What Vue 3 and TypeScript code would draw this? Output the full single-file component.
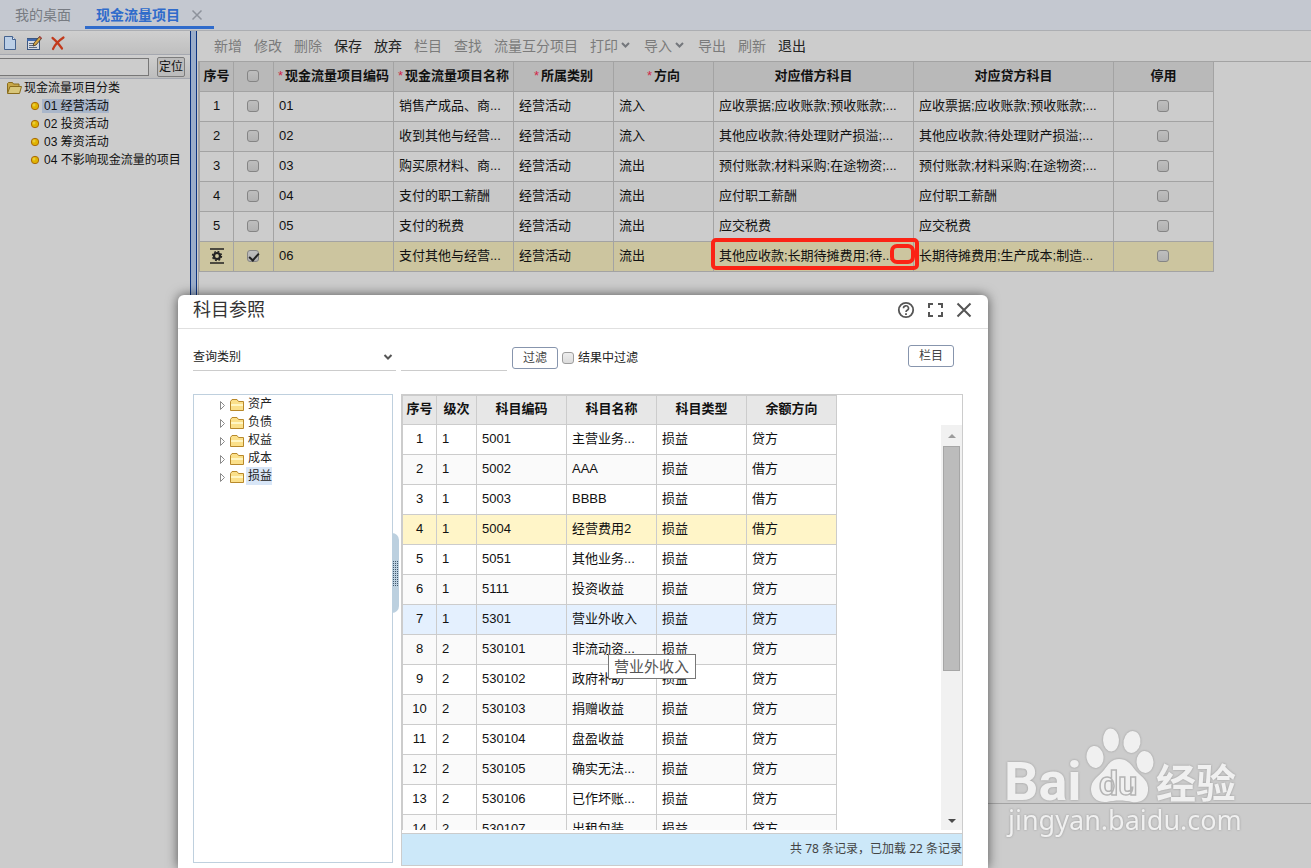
<script setup lang="ts">
import { ref } from 'vue'

interface Tool { label: string; active?: boolean; menu?: boolean }
interface FlowRow { code: string; name: string; kind: string; dir: string; debit: string; credit: string; checked: boolean; stopped: boolean }
interface Subject { level: number; code: string; name: string; side: string }

const tools: Tool[] = [
  { label: '新增' }, { label: '修改' }, { label: '删除' },
  { label: '保存', active: true }, { label: '放弃', active: true },
  { label: '栏目' }, { label: '查找' }, { label: '流量互分项目' },
  { label: '打印', menu: true }, { label: '导入', menu: true },
  { label: '导出' }, { label: '刷新' }, { label: '退出', active: true },
]

const categories = ['01 经营活动', '02 投资活动', '03 筹资活动', '04 不影响现金流量的项目']
const currentCategory = ref(0)

const flow = (code: string, name: string, dir: string, debit: string, credit: string, checked = false): FlowRow =>
  ({ code, name, kind: '经营活动', dir, debit, credit, checked, stopped: false })

const rows = ref<FlowRow[]>([
  flow('01', '销售产成品、商...', '流入', '应收票据;应收账款;预收账款;...', '应收票据;应收账款;预收账款;...'),
  flow('02', '收到其他与经营...', '流入', '其他应收款;待处理财产损溢;...', '其他应收款;待处理财产损溢;...'),
  flow('03', '购买原材料、商...', '流出', '预付账款;材料采购;在途物资;...', '预付账款;材料采购;在途物资;...'),
  flow('04', '支付的职工薪酬', '流出', '应付职工薪酬', '应付职工薪酬'),
  flow('05', '支付的税费', '流出', '应交税费', '应交税费'),
  flow('06', '支付其他与经营...', '流出', '其他应收款;长期待摊费用;待...', '长期待摊费用;生产成本;制造...', true),
])
const allChecked = ref(false)

const subjectKinds = ['资产', '负债', '权益', '成本', '损益']
const currentKind = ref('损益')

const subject = (level: number, code: string, name: string, side = '贷方'): Subject => ({ level, code, name, side })
const subjects: Subject[] = [
  subject(1, '5001', '主营业务...'),
  subject(1, '5002', 'AAA', '借方'),
  subject(1, '5003', 'BBBB', '借方'),
  subject(1, '5004', '经营费用2', '借方'),
  subject(1, '5051', '其他业务...'),
  subject(1, '5111', '投资收益'),
  subject(1, '5301', '营业外收入'),
  subject(2, '530101', '非流动资...'),
  subject(2, '530102', '政府补助'),
  subject(2, '530103', '捐赠收益'),
  subject(2, '530104', '盘盈收益'),
  subject(2, '530105', '确实无法...'),
  subject(2, '530106', '已作坏账...'),
  subject(2, '530107', '出租包装...'),
]
const selectedSubject = '5004'
const hoveredSubject = '5301'

const queryKind = ref('查询类别')
const keyword = ref('')
const withinResult = ref(false)
const locateText = ref('')
</script>

<template>
  <div class="page">
    <nav class="tabs">
      <a class="tab" href="#desk">我的桌面</a>
      <a class="tab current" href="#flow">现金流量项目
        <svg width="12" height="12" viewBox="0 0 12 12"><path d="M1.500 1.500l9 9m0-9l-9 9" stroke="#8d929b" stroke-width="1.500" fill="none" /></svg>
      </a>
    </nav>

    <div class="work">
      <aside class="side">
        <div class="side-tools">
          <button type="button" aria-label="新建">
            <svg width="16" height="16" viewBox="0 0 16 16"><path d="M2.500 1.500h8l3 3v10h-11z" fill="#bccfe6" stroke="#44628f" /><path d="M10.500 1.500v3h3" fill="#e3ebf4" stroke="#44628f" /></svg>
          </button>
          <button type="button" aria-label="编辑">
            <svg width="16" height="16" viewBox="0 0 16 16"><rect x="1.500" y="3.500" width="12" height="11" fill="#d5dae3" stroke="#3b5782" /><path d="M1 4h11v2H1z" fill="#3f68ae" /><path d="M3 8.500h6M3 10.500h4M3 12.500h8" stroke="#5b6a80" /><path d="M7 11l1-3 5.500-6.500 2 2L10 10z" fill="#d3a545" stroke="#3c3427" stroke-width=".8" /><path d="M12.700 2.300l1.300-1.300 2 2-1.200 1.200z" fill="#a44440" /></svg>
          </button>
          <button type="button" aria-label="删除">
            <svg width="16" height="16" viewBox="0 0 16 16"><path d="M2.500 3c4 3 7 7 9.500 10.500M13.500 2.500C9 5.500 5 9.500 3 14" stroke="#c23a1c" stroke-width="2.200" fill="none" stroke-linecap="round" /></svg>
          </button>
        </div>
        <div class="locate">
          <input v-model="locateText" type="text" aria-label="定位内容" />
          <button type="button">定位</button>
        </div>
        <ul class="tree">
          <li class="root">
            <svg width="16" height="14" viewBox="0 0 16 14"><path d="M1.500 12V2.500l1-1h4l1 1.500h5.500v2" fill="#c7a748" stroke="#8a6c1c" /><path d="M1.500 12.500L4 5.500h11.500l-2 7z" fill="#d8c67a" stroke="#8a6c1c" /></svg>
            <span>现金流量项目分类</span>
          </li>
          <li v-for="(c, i) in categories" :key="c" class="leaf" @click="currentCategory = i">
            <svg width="10" height="10" viewBox="0 0 10 10"><circle cx="5" cy="5" r="3.700" fill="#dfb300" stroke="#a8690c" /><circle cx="4" cy="4" r="1.500" fill="#e9cc3a" /></svg>
            <span :class="{ on: i === currentCategory }">{{ c }}</span>
          </li>
        </ul>
      </aside>
      <div class="splitter"></div>

      <main class="main">
        <div class="toolbar">
          <button v-for="t in tools" :key="t.label" type="button" :class="{ active: t.active }">
            {{ t.label }}<svg v-if="t.menu" width="14" height="10" viewBox="0 0 14 10"><path d="M4 2l3.500 3.500L11 2" fill="none" stroke="#74777c" stroke-width="2" /></svg>
          </button>
        </div>
        <div class="sheet">
          <table class="grid flows">
            <colgroup><col class="w34" /><col class="w40" /><col class="w120" /><col class="w120" /><col class="w100" /><col class="w100" /><col class="w200" /><col class="w200" /><col class="w100" /></colgroup>
            <thead>
              <tr>
                <th>序号</th>
                <th class="tick"><input v-model="allChecked" type="checkbox" aria-label="全选" /></th>
                <th><i>*</i>现金流量项目编码</th>
                <th><i>*</i>现金流量项目名称</th>
                <th><i>*</i>所属类别</th>
                <th><i>*</i>方向</th>
                <th>对应借方科目</th>
                <th>对应贷方科目</th>
                <th>停用</th>
              </tr>
            </thead>
            <tbody>
              <tr v-for="(r, i) in rows" :key="r.code" :class="{ editing: r.checked }">
                <td class="mid">
                  <svg v-if="r.checked" class="gear" width="16" height="18" viewBox="0 0 16 18"><path d="M1 2h14M1 16h14" stroke="#222" stroke-width="1.600" /><circle cx="8" cy="9" r="3" fill="none" stroke="#222" stroke-width="2.200" /><circle cx="8" cy="9" r="4.500" fill="none" stroke="#222" stroke-width="1.400" stroke-dasharray="1.800 1.734" /></svg>
                  <template v-else>{{ i + 1 }}</template>
                </td>
                <td class="mid tick"><input v-model="r.checked" type="checkbox" :aria-label="'选择 ' + r.code" /></td>
                <td>{{ r.code }}</td>
                <td>{{ r.name }}</td>
                <td>{{ r.kind }}</td>
                <td>{{ r.dir }}</td>
                <td class="debit">{{ r.debit }}<span v-if="r.checked" class="mark"></span><span v-if="r.checked" class="mark small"></span></td>
                <td>{{ r.credit }}</td>
                <td class="mid tick"><input v-model="r.stopped" type="checkbox" :aria-label="'停用 ' + r.code" /></td>
              </tr>
            </tbody>
          </table>
        </div>
        <div class="foot"></div>
      </main>
    </div>

    <section class="dialog" role="dialog" aria-labelledby="dialog-title">
      <header>
        <h2 id="dialog-title">科目参照</h2>
        <button type="button" aria-label="帮助">
          <svg width="18" height="18" viewBox="0 0 18 18"><circle cx="9" cy="9" r="7.200" fill="none" stroke="#555" stroke-width="1.800" /><path d="M6.500 7.300a2.500 2.400 0 1 1 3.700 2c-.8.500-1.200.9-1.200 1.800" fill="none" stroke="#555" stroke-width="1.600" /><path d="M8.100 12.200h1.800V14H8.100z" fill="#555" /></svg>
        </button>
        <button type="button" aria-label="最大化">
          <svg width="18" height="18" viewBox="0 0 18 18"><path d="M3 7V3h4M12 3h4v4M16 11v4h-4M7 15H3v-4" fill="none" stroke="#555" stroke-width="2" /></svg>
        </button>
        <button type="button" aria-label="关闭">
          <svg width="18" height="18" viewBox="0 0 18 18"><path d="M2.500 2.500l13 13m0-13l-13 13" stroke="#555" stroke-width="2" /></svg>
        </button>
      </header>
      <form class="query" @submit.prevent>
        <div class="pick">
          <select v-model="queryKind" aria-label="查询类别"><option>查询类别</option></select>
          <svg width="10" height="8" viewBox="0 0 10 8"><path d="M1.500 2L5 5.500 8.500 2" fill="none" stroke="#555" stroke-width="2" /></svg>
        </div>
        <input v-model="keyword" class="word" type="text" aria-label="查询内容" />
        <button type="submit" class="btn">过滤</button>
        <label><input v-model="withinResult" type="checkbox" />结果中过滤</label>
        <button type="button" class="btn cols">栏目</button>
      </form>
      <div class="body">
        <div class="kinds">
          <ul>
            <li v-for="k in subjectKinds" :key="k" @click="currentKind = k">
              <svg width="25" height="14" viewBox="0 0 25 14"><path d="M.5 3.500l4 4-4 4z" fill="#fff" stroke="#8b8b8b" /><path d="M10.500 12.500v-9l1.500-2h5l1.500 2h5v9z" fill="#fbe08a" stroke="#b8892b" /><path d="M11 6h12v2H11z" fill="#fff6c4" /></svg>
              <span :class="{ on: k === currentKind }">{{ k }}</span>
            </li>
          </ul>
          <div class="handle"><i></i></div>
        </div>
        <div class="panel">
          <div class="scroller">
            <table class="grid subjects">
              <colgroup><col class="w34" /><col class="w40" /><col class="w90" /><col class="w90" /><col class="w90" /><col class="w90" /></colgroup>
              <thead>
                <tr><th>序号</th><th>级次</th><th>科目编码</th><th>科目名称</th><th>科目类型</th><th>余额方向</th></tr>
              </thead>
              <tbody>
                <tr v-for="(s, i) in subjects" :key="s.code" :class="{ selected: s.code === selectedSubject, hovered: s.code === hoveredSubject }">
                  <td class="mid">{{ i + 1 }}</td>
                  <td>{{ s.level }}</td>
                  <td>{{ s.code }}</td>
                  <td class="name">{{ s.name }}<span v-if="s.code === hoveredSubject" class="tip" role="tooltip">{{ s.name }}</span></td>
                  <td>损益</td>
                  <td>{{ s.side }}</td>
                </tr>
              </tbody>
            </table>
            <div class="bar">
              <svg width="21" height="21" viewBox="0 0 21 21"><path d="M7 13l4-4 4 4z" fill="#9c9c9c" /></svg>
              <div class="track"><div class="thumb"></div></div>
              <svg width="21" height="21" viewBox="0 0 21 21"><path d="M7 10l4 4 4-4z" fill="#4b4b4b" /></svg>
            </div>
          </div>
          <p class="count">共 78 条记录，已加载 22 条记录</p>
        </div>
      </div>
    </section>

    <svg class="brand" width="250" height="120" viewBox="0 0 250 120">
      <g fill="#f0f0f0">
        <text x="0" y="72" class="latin" font-size="54">Bai</text>
        <ellipse cx="107" cy="12" rx="8" ry="11.500" transform="rotate(-3 107 12)" />
        <ellipse cx="128" cy="14" rx="8.500" ry="11" transform="rotate(10 128 14)" />
        <ellipse cx="91" cy="29" rx="8.500" ry="11" transform="rotate(-8 91 29)" />
        <ellipse cx="141" cy="34" rx="8.500" ry="11" transform="rotate(-4 141 34)" />
        <path d="M115 31c9 0 12 6 17 12 7 7 13 10 12 20-1 9-8 12-16 11-8-2-17-2-25 0-10 1-16-5-16-13 0-9 7-12 13-19 4-5 7-11 15-11z" />
        <text x="152" y="70" class="cjk" font-size="40">经验</text>
        <text x="4" y="102" class="site" font-size="27">jingyan.baidu.com</text>
      </g>
      <text x="95" y="67" class="latin" font-size="34" fill="#f0f0f0" stroke="#b4b4b4" stroke-width="1.500">du</text>
    </svg>
  </div>
</template>

<style>
html, body { background: #ccc; overflow: hidden; }
</style>

<style scoped>
.page {
  position: relative;
  display: flex;
  flex-direction: column;
  height: 100vh;
  overflow: hidden;
  font: 13px/18px "Liberation Sans", "Noto Sans CJK SC", sans-serif;
  color: #111;
}
* { box-sizing: border-box; }
button { padding: 0; border: 0; background: none; font: inherit; color: inherit; }
ul { margin: 0; padding: 0; list-style: none; }
svg { flex: none; display: block; }

.tabs { display: flex; flex: none; height: 31px; border-bottom: 1px solid #acaeb2; background: #c4c8d0; font-size: 14px; }
.tab { display: flex; align-items: center; height: 29px; padding: 0 14px 0 15px; color: #777b82; text-decoration: none; }
.tab.current { gap: 11px; padding: 0 11px; color: #2f6bcb; font-weight: bold; box-shadow: inset 0 -3px #2f6bcb; }

.work { display: flex; flex: 1; min-height: 0; }
.side { flex: none; width: 190px; background: #ccc; font-size: 12px; }
.side-tools { display: flex; align-items: center; gap: 8px; height: 24px; padding: 0 2px; border-bottom: 1px solid #a5a8b0; background: linear-gradient(#cfcfcf, #bfbfbf); }
.locate { display: flex; align-items: center; gap: 8px; height: 24px; border-bottom: 1px solid #a5a8b0; background: linear-gradient(#cfcfcf, #bdbdbd); }
.locate input { width: 149px; height: 18px; border: 1px solid #777; border-left: 0; background: #ccc; }
.locate button { width: 28px; height: 20px; border: 1px solid #7c7c7c; border-radius: 2px; background: #bcbcbc; line-height: 18px; }
.tree li { display: flex; align-items: center; height: 18px; white-space: nowrap; }
.tree .root { gap: 2px; padding-left: 6px; }
.tree .leaf { gap: 2px; padding-left: 30px; }
.tree .leaf span { padding: 0 0 0 2px; line-height: 14px; }
.tree .on { background: #a9b6ca; }
.splitter { flex: none; width: 7px; border: solid #0c3380; border-width: 0 1px; background: #9badc9; }

.main { display: flex; flex: 1; flex-direction: column; min-width: 0; padding-left: 1px; }
.toolbar { display: flex; flex: none; gap: 12px; align-items: center; height: 30px; padding-left: 16px; font-size: 14px; color: #7b7b7b; white-space: nowrap; }
.toolbar button { display: flex; align-items: center; }
.toolbar .active { color: #222; }
.sheet { flex: 1; min-height: 0; border: 1px solid #a3a3a3; border-right: 0; }
.foot { flex: none; height: 64px; }

.grid { border-collapse: separate; border-spacing: 0; table-layout: fixed; border-left: 1px solid var(--line); --line: #a3a3a3; }
.grid th, .grid td { height: 30px; padding: 0 0 2px 5px; border: solid var(--line); border-width: 0 1px 1px 0; text-align: left; white-space: nowrap; }
.grid th { padding: 0 0 2px; background: #b9b9b9; text-align: center; }
.grid .mid { padding: 0 0 2px; text-align: center; }
.grid .tick { padding-right: 2px; }
.grid .mid svg { margin: auto; }
.grid th i { margin-right: 2px; color: #d3264a; font-style: normal; font-weight: normal; }
.flows { width: 1015px; }
.flows tbody tr:nth-child(even) { background: #c8c8c8; }
.flows tbody tr.editing { background: #ccc59f; }
.subjects { --line: #ccc; flex: none; width: 435px; border-top: 1px solid #ccc; }
.subjects th { height: 29px; background: #e7e7e7; }
.subjects tbody tr:nth-child(even) { background: #fafafa; }
.subjects tbody tr.selected { background: #fff5c8; }
.subjects tbody tr.hovered { background: #e4f0fe; }
.w34 { width: 34px; }
.w40 { width: 40px; }
.w90 { width: 90px; }
.w100 { width: 100px; }
.w120 { width: 120px; }
.w200 { width: 200px; }

input[type="checkbox"] { appearance: none; position: relative; width: 12px; height: 12px; margin: 0; border: 1px solid #858585; border-radius: 3px; background: linear-gradient(#bebebe, #b1b1b1); vertical-align: middle; }
input[type="checkbox"]:checked::after { content: ""; position: absolute; left: 3px; top: 0; width: 4px; height: 8px; border: solid #222; border-width: 0 2px 2px 0; transform: rotate(42deg); }

.debit, .name { position: relative; }
.mark { position: absolute; left: -3px; top: -4px; width: 208px; height: 32px; border: 4px solid #fb2315; border-radius: 5px; }
.mark.small { left: 176px; top: 2px; width: 25px; height: 20px; border-radius: 7px; background: #ccc59f; }

.dialog { position: absolute; left: 178px; top: 295px; bottom: 0; display: flex; flex-direction: column; width: 810px; border-radius: 6px 6px 0 0; background: #fff; box-shadow: 0 0 12px rgba(0, 0, 0, .6); }
.dialog header { display: flex; flex: none; align-items: center; gap: 11px; height: 34px; padding: 0 15px 3px; border-bottom: 1px solid #e0e0e0; }
.dialog h2 { margin: 0 auto 0 0; font-size: 18px; line-height: 24px; font-weight: normal; color: #333; }
.query { display: flex; flex: none; align-items: flex-end; height: 42px; padding: 0 34px 0 15px; font-size: 12px; color: #222; }
.pick { position: relative; width: 203px; border-bottom: 1px solid #ccc; }
.pick select { appearance: none; width: 100%; height: 26px; padding: 0; border: 0; background: none; font: inherit; color: inherit; }
.pick svg { position: absolute; right: 3px; top: 9px; }
.word { width: 106px; height: 26px; margin: 0 5px; border: 0; border-bottom: 1px solid #ccc; background: none; }
.btn { width: 46px; height: 22px; margin-bottom: 2px; border: 1px solid #8795ad; border-radius: 3px; background: #fff; line-height: 20px; color: #444; }
.query label { display: flex; align-items: center; gap: 4px; height: 26px; margin-left: 4px; }
.query input[type="checkbox"] { border-color: #9d9d9d; background: linear-gradient(#eee, #dcdcdc); }
.cols { margin: 0 0 4px auto; }

.body { display: flex; flex: 1; gap: 8px; min-height: 0; padding: 23px 25px 2px 15px; }
.kinds { position: relative; flex: none; width: 200px; margin-bottom: 3px; border: 1px solid #bfd0de; font-size: 12px; color: #222; }
.kinds li { display: flex; align-items: center; gap: 1px; height: 18px; padding-left: 26px; }
.kinds li span { padding: 0 0 0 2px; }
.kinds li svg { margin-top: 1px; }
.kinds .on { background: #d8e6f7; }
.handle { position: absolute; right: -7px; top: 138px; display: flex; align-items: center; width: 7px; height: 80px; border-radius: 0 7px 7px 0; background: #bcd0df; }
.handle i { width: 5px; height: 25px; margin-left: 1px; background: linear-gradient(transparent 1px, #bcd0df 1px) 0 0 / 2px 2px, linear-gradient(90deg, #40586e 1px, transparent 1px) 0 0 / 2px 2px; }
.panel { display: flex; flex: 1; flex-direction: column; min-width: 0; border: 1px solid #ccc; }
.scroller { display: flex; flex: 1; align-items: flex-start; justify-content: space-between; min-height: 0; margin-bottom: 3px; overflow: hidden; }
.bar { display: flex; flex: none; flex-direction: column; align-self: stretch; width: 21px; margin-top: 30px; background: #f1f1f1; }
.track { flex: 1; padding: 0 2px; }
.thumb { height: 62%; border: 1px solid #a6a6a6; background: #bcbcbc; }
.count { flex: none; height: 32px; margin: 0; border-top: 1px solid #ccc; background: #cce8f9; font: 12px/30px "Noto Sans", "Noto Sans CJK SC", sans-serif; color: #444; text-align: right; }
.tip { position: absolute; z-index: 2; left: 41px; top: 49px; padding: 0 6px 0 5px; border: 1px solid #777; background: #fff; font-size: 15px; line-height: 23px; color: #555; }

.brand { position: absolute; right: 57px; bottom: 20px; overflow: visible; filter: drop-shadow(0 0 1px #999); }
.latin { font-family: Roboto, sans-serif; font-weight: bold; }
.cjk { font-family: "Noto Sans CJK SC", sans-serif; font-weight: bold; }
.site { font-family: "Noto Sans", sans-serif; }
</style>
